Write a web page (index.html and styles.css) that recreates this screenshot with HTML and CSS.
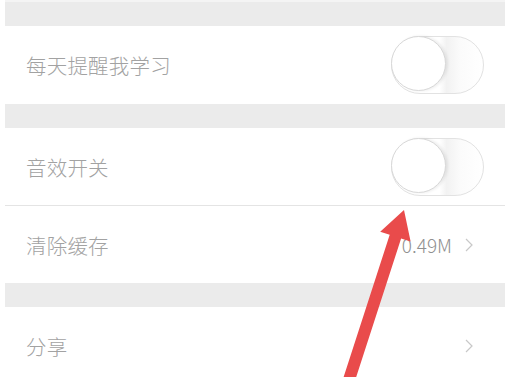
FILE: index.html
```html
<!DOCTYPE html>
<html lang="zh">
<head>
<meta charset="utf-8">
<link rel="stylesheet" href="styles.css">
</head>
<body>
<div class="page">
  <div class="gap gap-top"></div>
  <div class="row">
    <span class="label">每天提醒我学习</span>
    <span class="switch"><span class="knob"></span></span>
  </div>
  <div class="gap"></div>
  <div class="row row-divided">
    <span class="label">音效开关</span>
    <span class="switch"><span class="knob"></span></span>
  </div>
  <div class="row">
    <span class="label">清除缓存</span>
    <span class="value">0.49M</span>
    <svg class="chev" viewBox="0 0 8 14" width="8" height="14"><path d="M1 1 L7 7 L1 13" fill="none" stroke="#c8c8c8" stroke-width="1.2"/></svg>
  </div>
  <div class="gap"></div>
  <div class="row">
    <span class="label">分享</span>
    <svg class="chev" viewBox="0 0 8 14" width="8" height="14"><path d="M1 1 L7 7 L1 13" fill="none" stroke="#c8c8c8" stroke-width="1.2"/></svg>
  </div>
</div>
<svg class="arrow" viewBox="0 0 505 377" width="505" height="377">
  <polygon points="404,210 410.6,241.5 401.1,238.4 351.4,391.8 340,388.2 389.7,234.8 380.2,231.7" fill="#e94b4b"/>
</svg>
</body>
</html>
```
FILE: styles.css
```css
html, body {
  margin: 0;
  padding: 0;
  background: #ffffff;
  overflow: hidden;
}
body {
  width: 505px;
  height: 377px;
  position: relative;
  font-family: "Noto Sans CJK SC", "Noto Sans", sans-serif;
}
.page {
  margin-left: 5px;
  display: flex;
  flex-direction: column;
}
.gap {
  height: 24px;
  background: #ebebeb;
}
.gap-top {
  height: 24px;
  border-top: 2px solid #f4f4f4;
}
.row {
  height: 78px;
  display: flex;
  align-items: center;
  padding: 0 21px 0 21px;
  background: #ffffff;
}
.row-divided {
  height: 77px;
  border-bottom: 1px solid #e4e4e4;
}
.row-divided + .row {
  height: 77px;
}
.label {
  flex: 1;
  font-size: 20.5px;
  font-weight: 300;
  color: #a2a2a2;
  letter-spacing: 0.2px;
}
.value {
  font-size: 19px;
  font-weight: 300;
  color: #909090;
  margin-right: 13px;
}
.chev {
  margin-right: 11px;
  display: block;
}
.switch {
  width: 93px;
  height: 58px;
  box-sizing: border-box;
  border: 1.5px solid #e2e2e2;
  border-radius: 29px;
  background: linear-gradient(to right, #ffffff 0%, #ffffff 52%, #f2f2f2 60%, #fbfbfb 75%, #ffffff 100%);
  position: relative;
  display: block;
}
.knob {
  position: absolute;
  left: -1px;
  top: -1px;
  width: 55px;
  height: 55px;
  box-sizing: border-box;
  border-radius: 50%;
  border: 1.5px solid #d8d8d8;
  background: #ffffff;
  box-shadow: 2px 0 3px rgba(0, 0, 0, 0.08);
}
.arrow {
  position: absolute;
  left: 0;
  top: 0;
  pointer-events: none;
}
```
